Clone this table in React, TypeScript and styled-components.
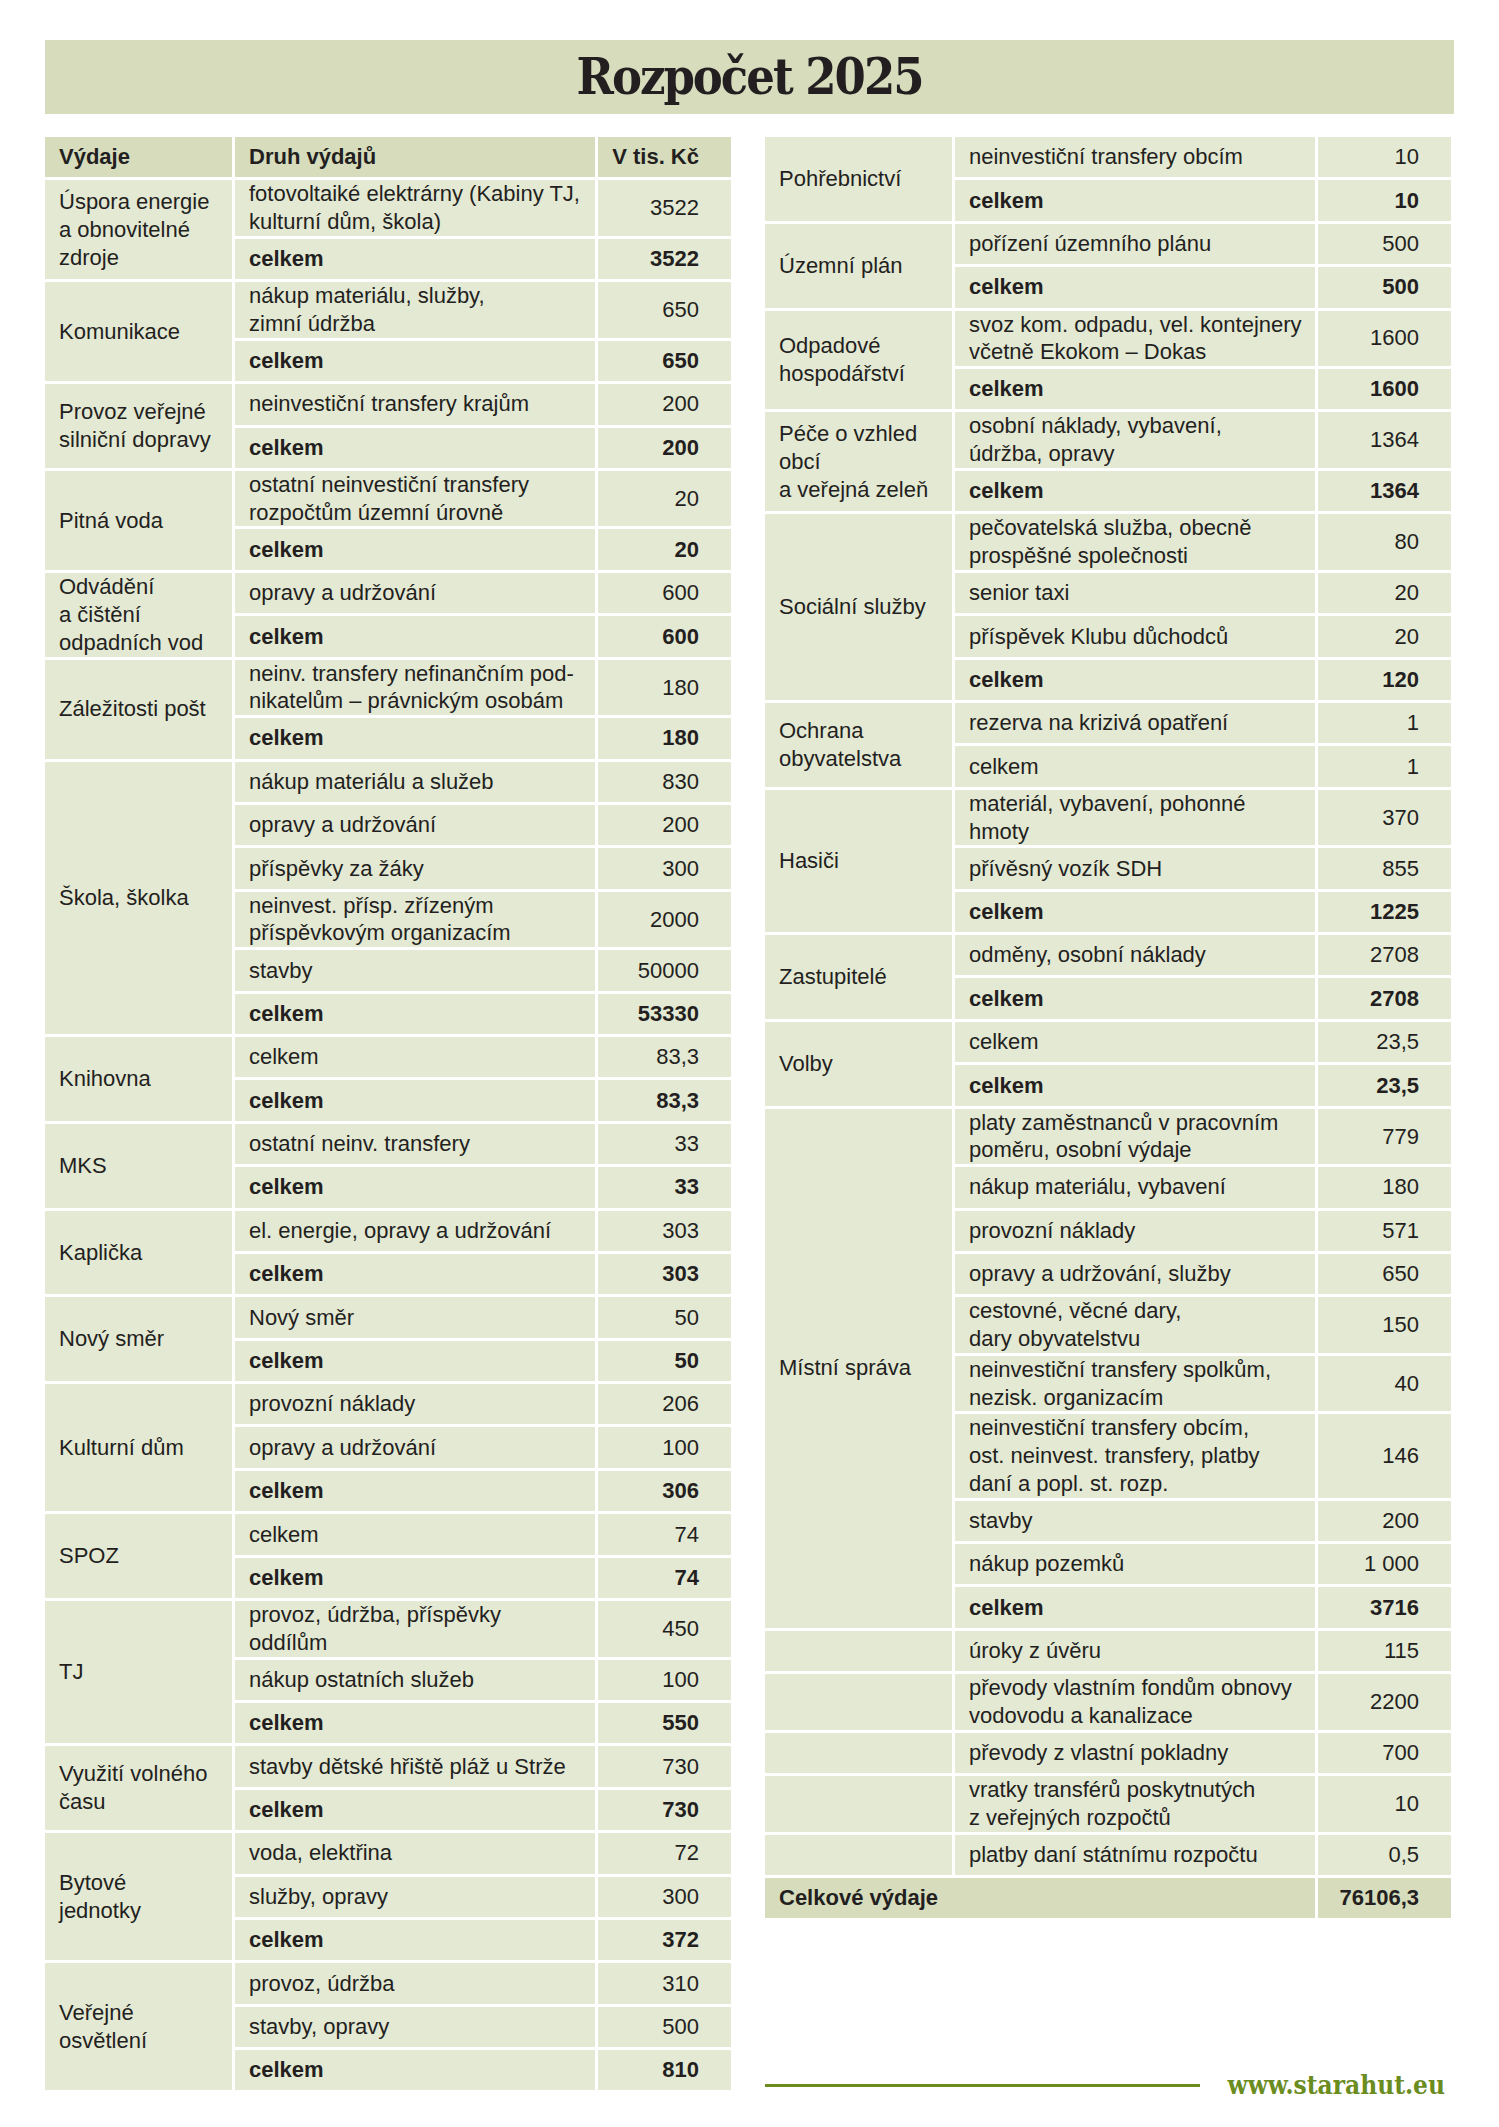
import styled, { createGlobalStyle } from "styled-components";

const GlobalStyle = createGlobalStyle`
  html, body {
    margin: 0;
    padding: 0;
    background: #ffffff;
  }
  body {
    font-family: "Liberation Sans", Arial, sans-serif;
    color: #231f20;
  }
`

const Page = styled.div`
  width: 1499px;
  min-height: 2127px;
  box-sizing: border-box;
  padding: 40px 45px 0 45px;
`
const TitleBar = styled.div`
  height: 74px;
  background-color: #d6dcbc;
  display: flex;
  align-items: center;
  justify-content: center;
`
const Title = styled.h1`
  margin: 0;
  font-family: "DejaVu Serif Condensed", "DejaVu Serif", serif;
  font-weight: 700;
  font-size: 50px;
  line-height: 1;
  color: #231f20;
  letter-spacing: -2px;
`
const Columns = styled.div`
  display: grid;
  grid-template-columns: 686px 686px;
  column-gap: 34px;
  margin-top: 23px;
  align-items: stretch;
`
const Column = styled.div`
  display: flex;
  flex-direction: column;
  justify-content: space-between;
`
const Table = styled.table`
  border-collapse: separate;
  border-spacing: 3px;
  table-layout: fixed;
  width: 692px;
  margin: -3px;
  font-size: 22px;
`
const Cell = styled.td<{ $right?: boolean; $bold?: boolean; $head?: boolean }>`
  background-color: ${(p) => (p.$head ? "#d6dcbc" : "#e4e9d4")};
  height: 40.4px;
  padding: 0 ${(p) => (p.$right ? "32px" : "14px")} 0 14px;
  line-height: 27.75px;
  vertical-align: middle;
  white-space: nowrap;
  text-align: ${(p) => (p.$right ? "right" : "left")};
  font-weight: ${(p) => (p.$bold ? 700 : 400)};
`
const Footer = styled.div`
  display: flex;
  align-items: center;
  gap: 28px;
  margin-bottom: -10px;
`
const Rule = styled.div`
  flex: 1;
  height: 3px;
  background-color: #6b8c1f;
`
const Site = styled.span`
  font-family: "DejaVu Serif Condensed", "DejaVu Serif", serif;
  font-weight: 700;
  font-size: 26px;
  line-height: 30px;
  color: #6b8c1f;
  margin-right: 6px;
`

type Item = { text: string[]; value: string; bold?: boolean };
type Group = { name: string[]; items: Item[] };

const c = (value: string, bold = true): Item => ({ text: ["celkem"], value, bold });
const i = (text: string | string[], value: string): Item => ({
  text: Array.isArray(text) ? text : [text],
  value,
});

const leftGroups: Group[] = [
  {
    name: ["Úspora energie", "a obnovitelné", "zdroje"],
    items: [i(["fotovoltaiké elektrárny (Kabiny TJ,", "kulturní dům, škola)"], "3522"), c("3522")],
  },
  { name: ["Komunikace"], items: [i(["nákup materiálu, služby,", "zimní údržba"], "650"), c("650")] },
  { name: ["Provoz veřejné", "silniční dopravy"], items: [i("neinvestiční transfery krajům", "200"), c("200")] },
  {
    name: ["Pitná voda"],
    items: [i(["ostatní neinvestiční transfery", "rozpočtům územní úrovně"], "20"), c("20")],
  },
  { name: ["Odvádění", "a čištění", "odpadních vod"], items: [i("opravy a udržování", "600"), c("600")] },
  {
    name: ["Záležitosti pošt"],
    items: [i(["neinv. transfery nefinančním pod-", "nikatelům – právnickým osobám"], "180"), c("180")],
  },
  {
    name: ["Škola, školka"],
    items: [
      i("nákup materiálu a služeb", "830"),
      i("opravy a udržování", "200"),
      i("příspěvky za žáky", "300"),
      i(["neinvest. přísp. zřízeným", "příspěvkovým organizacím"], "2000"),
      i("stavby", "50000"),
      c("53330"),
    ],
  },
  { name: ["Knihovna"], items: [c("83,3", false), c("83,3")] },
  { name: ["MKS"], items: [i("ostatní neinv. transfery", "33"), c("33")] },
  { name: ["Kaplička"], items: [i("el. energie, opravy a udržování", "303"), c("303")] },
  { name: ["Nový směr"], items: [i("Nový směr", "50"), c("50")] },
  {
    name: ["Kulturní dům"],
    items: [i("provozní náklady", "206"), i("opravy a udržování", "100"), c("306")],
  },
  { name: ["SPOZ"], items: [c("74", false), c("74")] },
  {
    name: ["TJ"],
    items: [i(["provoz, údržba, příspěvky", "oddílům"], "450"), i("nákup ostatních služeb", "100"), c("550")],
  },
  { name: ["Využití volného", "času"], items: [i("stavby dětské hřiště pláž u Strže", "730"), c("730")] },
  {
    name: ["Bytové", "jednotky"],
    items: [i("voda, elektřina", "72"), i("služby, opravy", "300"), c("372")],
  },
  {
    name: ["Veřejné", "osvětlení"],
    items: [i("provoz, údržba", "310"), i("stavby, opravy", "500"), c("810")],
  },
];

const rightGroups: Group[] = [
  { name: ["Pohřebnictví"], items: [i("neinvestiční transfery obcím", "10"), c("10")] },
  { name: ["Územní plán"], items: [i("pořízení územního plánu", "500"), c("500")] },
  {
    name: ["Odpadové", "hospodářství"],
    items: [i(["svoz kom. odpadu, vel. kontejnery", "včetně Ekokom – Dokas"], "1600"), c("1600")],
  },
  {
    name: ["Péče o vzhled", "obcí", "a veřejná zeleň"],
    items: [i(["osobní náklady, vybavení,", "údržba, opravy"], "1364"), c("1364")],
  },
  {
    name: ["Sociální služby"],
    items: [
      i(["pečovatelská služba, obecně", "prospěšné společnosti"], "80"),
      i("senior taxi", "20"),
      i("příspěvek Klubu důchodců", "20"),
      c("120"),
    ],
  },
  { name: ["Ochrana", "obyvatelstva"], items: [i("rezerva na krizivá opatření", "1"), c("1", false)] },
  {
    name: ["Hasiči"],
    items: [i(["materiál, vybavení, pohonné", "hmoty"], "370"), i("přívěsný vozík SDH", "855"), c("1225")],
  },
  { name: ["Zastupitelé"], items: [i("odměny, osobní náklady", "2708"), c("2708")] },
  { name: ["Volby"], items: [c("23,5", false), c("23,5")] },
  {
    name: ["Místní správa"],
    items: [
      i(["platy zaměstnanců v pracovním", "poměru, osobní výdaje"], "779"),
      i("nákup materiálu, vybavení", "180"),
      i("provozní náklady", "571"),
      i("opravy a udržování, služby", "650"),
      i(["cestovné, věcné dary,", "dary obyvatelstvu"], "150"),
      i(["neinvestiční transfery spolkům,", "nezisk. organizacím"], "40"),
      i(["neinvestiční transfery obcím,", "ost. neinvest. transfery, platby", "daní a popl. st. rozp."], "146"),
      i("stavby", "200"),
      i("nákup pozemků", "1 000"),
      c("3716"),
    ],
  },
  { name: [], items: [i("úroky z úvěru", "115")] },
  { name: [], items: [i(["převody vlastním fondům obnovy", "vodovodu a kanalizace"], "2200")] },
  { name: [], items: [i("převody z vlastní pokladny", "700")] },
  { name: [], items: [i(["vratky transférů poskytnutých", "z veřejných rozpočtů"], "10")] },
  { name: [], items: [i("platby daní státnímu rozpočtu", "0,5")] },
];

function Lines({ lines }: { lines: string[] }) {
  return (
    <>
      {lines.map((l, n) => (
        <span key={n}>
          {n > 0 && <br />}
          {l}
        </span>
      ))}
    </>
  );
}

function GroupRows({ group }: { group: Group }) {
  return (
    <>
      {group.items.map((item, n) => (
        <tr key={n}>
          {n === 0 && (
            <Cell rowSpan={group.items.length}>
              <Lines lines={group.name} />
            </Cell>
          )}
          <Cell $bold={item.bold}>
            <Lines lines={item.text} />
          </Cell>
          <Cell $right $bold={item.bold}>
            {item.value}
          </Cell>
        </tr>
      ))}
    </>
  );
}

function Cols() {
  return (
    <colgroup>
      <col style={{ width: 187 }} />
      <col style={{ width: 360 }} />
      <col style={{ width: 133 }} />
    </colgroup>
  );
}

export default function App() {
  return (
    <Page>
      <GlobalStyle />
      <TitleBar>
        <Title>Rozpočet 2025</Title>
      </TitleBar>
      <Columns>
        <Column>
          <Table>
            <Cols />
            <thead>
              <tr>
                <Cell as="th" $head $bold>Výdaje</Cell>
                <Cell as="th" $head $bold>Druh výdajů</Cell>
                <Cell as="th" $head $bold $right>V tis. Kč</Cell>
              </tr>
            </thead>
            <tbody>
              {leftGroups.map((g, n) => (
                <GroupRows key={n} group={g} />
              ))}
            </tbody>
          </Table>
        </Column>
        <Column>
          <Table>
            <Cols />
            <tbody>
              {rightGroups.map((g, n) => (
                <GroupRows key={n} group={g} />
              ))}
              <tr>
                <Cell colSpan={2} $head $bold>Celkové výdaje</Cell>
                <Cell $head $bold $right>76106,3</Cell>
              </tr>
            </tbody>
          </Table>
          <Footer>
            <Rule />
            <Site>www.starahut.eu</Site>
          </Footer>
        </Column>
      </Columns>
    </Page>
  );
}
